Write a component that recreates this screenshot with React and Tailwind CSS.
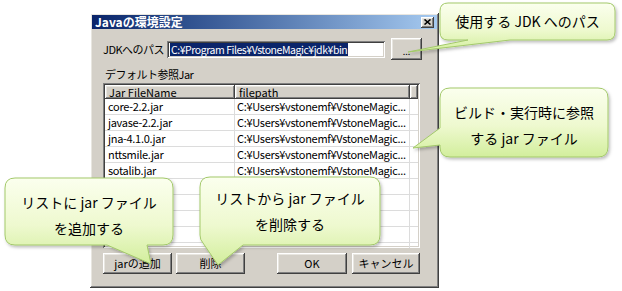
import React from "react";

const FONT = "[font-family:'Noto_Sans_CJK_JP','Liberation_Sans',sans-serif]";

const RAISED =
  "shadow-[inset_-1px_-1px_#404040,inset_1px_1px_#ffffff,inset_-2px_-2px_#808080,inset_2px_2px_#e8e6e0]";
const SUNKEN =
  "shadow-[inset_1px_1px_#808080,inset_-1px_-1px_#ffffff,inset_2px_2px_#404040,inset_-2px_-2px_#d4d0c8]";

const JARS = ["core-2.2.jar", "javase-2.2.jar", "jna-4.1.0.jar", "nttsmile.jar", "sotalib.jar"];

const CALLOUTS = [
  {
    d: "M448,3 H607 Q615,3 615,11 V32 Q615,40 607,40 H510 L408,52 L468,40 H448 Q440,40 440,32 V11 Q440,3 448,3 Z",
  },
  {
    d: "M450,88 H598 Q608,88 608,98 V147 Q608,157 598,157 H450 Q440,157 440,147 V145 L413,148 L440,128 V98 Q440,88 450,88 Z",
  },
  {
    d: "M15,178 H163 Q173,178 173,188 V235 Q173,245 163,245 H147 L151,264 L107,245 H15 Q5,245 5,235 V188 Q5,178 15,178 Z",
  },
  {
    d: "M210,177 H370 Q380,177 380,187 V235 Q380,245 370,245 H243 L218,265 L203,243 Q200,240 200,235 V187 Q200,177 210,177 Z",
  },
];

const Button = ({ children, className }) => (
  <div
    className={`h-[21px] flex items-center justify-center bg-[#d4d0c8] text-[11px] leading-none text-black ${RAISED} ${className}`}
  >
    {children}
  </div>
);

const Dialog = () => (
  <div
    className={`ml-[90px] mt-[13px] w-[349px] h-[275px] bg-[#d4d0c8] p-[2px] flex flex-col ${RAISED}`}
  >
    {/* Title bar */}
    <div className="h-[14px] bg-gradient-to-r from-[#0a246a] to-[#a6caf0] flex items-center justify-between pl-[3px] pr-[3px]">
      <span className="text-white font-bold text-[12px] leading-none">Javaの環境設定</span>
      <div className={`w-[13px] h-[11px] bg-[#d4d0c8] flex items-center justify-center ${RAISED}`}>
        <svg width="7" height="6" viewBox="0 0 7 6">
          <path d="M0.5,0.5 L6.5,5.5 M6.5,0.5 L0.5,5.5" stroke="#000" strokeWidth="1.6" />
        </svg>
      </div>
    </div>

    <div className="flex flex-col pl-[11px]">
      {/* JDK path row */}
      <div className="mt-[9px] h-[22px] flex items-center text-[11px] text-black">
        <span className="w-[64px] tracking-[-0.5px] leading-none">JDKへのパス</span>
        <div className={`w-[218px] h-[17px] bg-white flex items-center pl-[3px] overflow-hidden ${SUNKEN}`}>
          <span className="bg-[#0a246a] text-white leading-[13px] px-[1px] text-[10.5px] tracking-[-0.45px] whitespace-nowrap">
            C:¥Program Files¥VstoneMagic¥jdk¥bin
          </span>
        </div>
        <Button className="ml-[6px] w-[31px] h-[22px]">
          <span className="text-[9px] leading-none mt-[4px]">...</span>
        </Button>
      </div>

      {/* Default jar label */}
      <div className="mt-[8px] h-[13px] text-[11px] leading-[13px] text-black pl-[2px] tracking-[-0.5px]">
        デフォルト参照Jar
      </div>

      {/* Table */}
      <div className={`mt-[2px] w-[317px] h-[165px] bg-white p-[2px] overflow-hidden ${SUNKEN}`}>
        <div className="flex h-[14px] text-[11px] leading-none">
          <div className={`w-[130px] bg-[#d4d0c8] pl-[4px] flex items-center overflow-hidden ${RAISED}`}>
            Jar FileName
          </div>
          <div className={`w-[175px] bg-[#d4d0c8] pl-[4px] flex items-center overflow-hidden ${RAISED}`}>
            filepath
          </div>
          <div className={`flex-1 bg-[#d4d0c8] ${RAISED}`} />
        </div>
        {Array.from({ length: 10 }).map((_, i) => (
          <div key={i} className="flex h-[16px] border-b border-[#dcdcdc] text-[11px] leading-none">
            <div className="w-[130px] border-r border-[#dcdcdc] pl-[3px] tracking-[-0.3px] flex items-center overflow-hidden">
              {JARS[i] || ""}
            </div>
            <div className="w-[175px] border-r border-[#dcdcdc] pl-[2px] tracking-[-0.3px] flex items-center overflow-hidden whitespace-nowrap">
              {JARS[i] ? "C:¥Users¥vstonemf¥VstoneMagic..." : ""}
            </div>
            <div className="flex-1" />
          </div>
        ))}
      </div>

      {/* Buttons */}
      <div className="mt-[5px] flex">
        <Button className="w-[69px]">jarの追加</Button>
        <Button className="ml-[4px] w-[69px]">削除</Button>
        <Button className="ml-[32px] w-[70px]">OK</Button>
        <Button className="ml-[5px] w-[68px]">キャンセル</Button>
      </div>
    </div>
  </div>
);

const Callouts = () => (
  <>
    <svg className="absolute left-0 top-0 pointer-events-none" width="622" height="291" viewBox="0 0 622 291">
      <defs>
        <linearGradient id="bubbleFill" x1="0" y1="0" x2="0" y2="1">
          <stop offset="0" stopColor="#fbffee" />
          <stop offset="0.55" stopColor="#eef9cf" />
          <stop offset="1" stopColor="#d2ee9c" />
        </linearGradient>
        <filter id="bubbleShadow" x="-10%" y="-10%" width="130%" height="140%">
          <feDropShadow dx="1.5" dy="2" stdDeviation="1.5" floodColor="#000" floodOpacity="0.25" />
        </filter>
      </defs>
      {CALLOUTS.map((c, i) => (
        <path
          key={i}
          d={c.d}
          fill="url(#bubbleFill)"
          stroke="#a3c96a"
          strokeWidth="1"
          filter="url(#bubbleShadow)"
        />
      ))}
    </svg>

    <div className="absolute left-[440px] top-[3px] w-[175px] h-[37px] flex items-center justify-center text-[14px] text-black">
      使用する JDK へのパス
    </div>
    <div className="absolute left-[440px] top-[99px] w-[168px] flex flex-col items-center text-[14px] leading-[26px] text-black">
      <span>ビルド・実行時に参照</span>
      <span>する jar ファイル</span>
    </div>
    <div className="absolute left-[5px] top-[189px] w-[168px] flex flex-col items-center text-[14px] leading-[26px] text-black">
      <span>リストに jar ファイル</span>
      <span>を追加する</span>
    </div>
    <div className="absolute left-[200px] top-[185px] w-[180px] flex flex-col items-center text-[14px] leading-[26px] text-black">
      <span>リストから jar ファイル</span>
      <span>を削除する</span>
    </div>
  </>
);

export default function App() {
  return (
    <div className={`relative w-[622px] h-[291px] bg-white overflow-hidden ${FONT}`}>
      <Dialog />
      <Callouts />
    </div>
  );
}
